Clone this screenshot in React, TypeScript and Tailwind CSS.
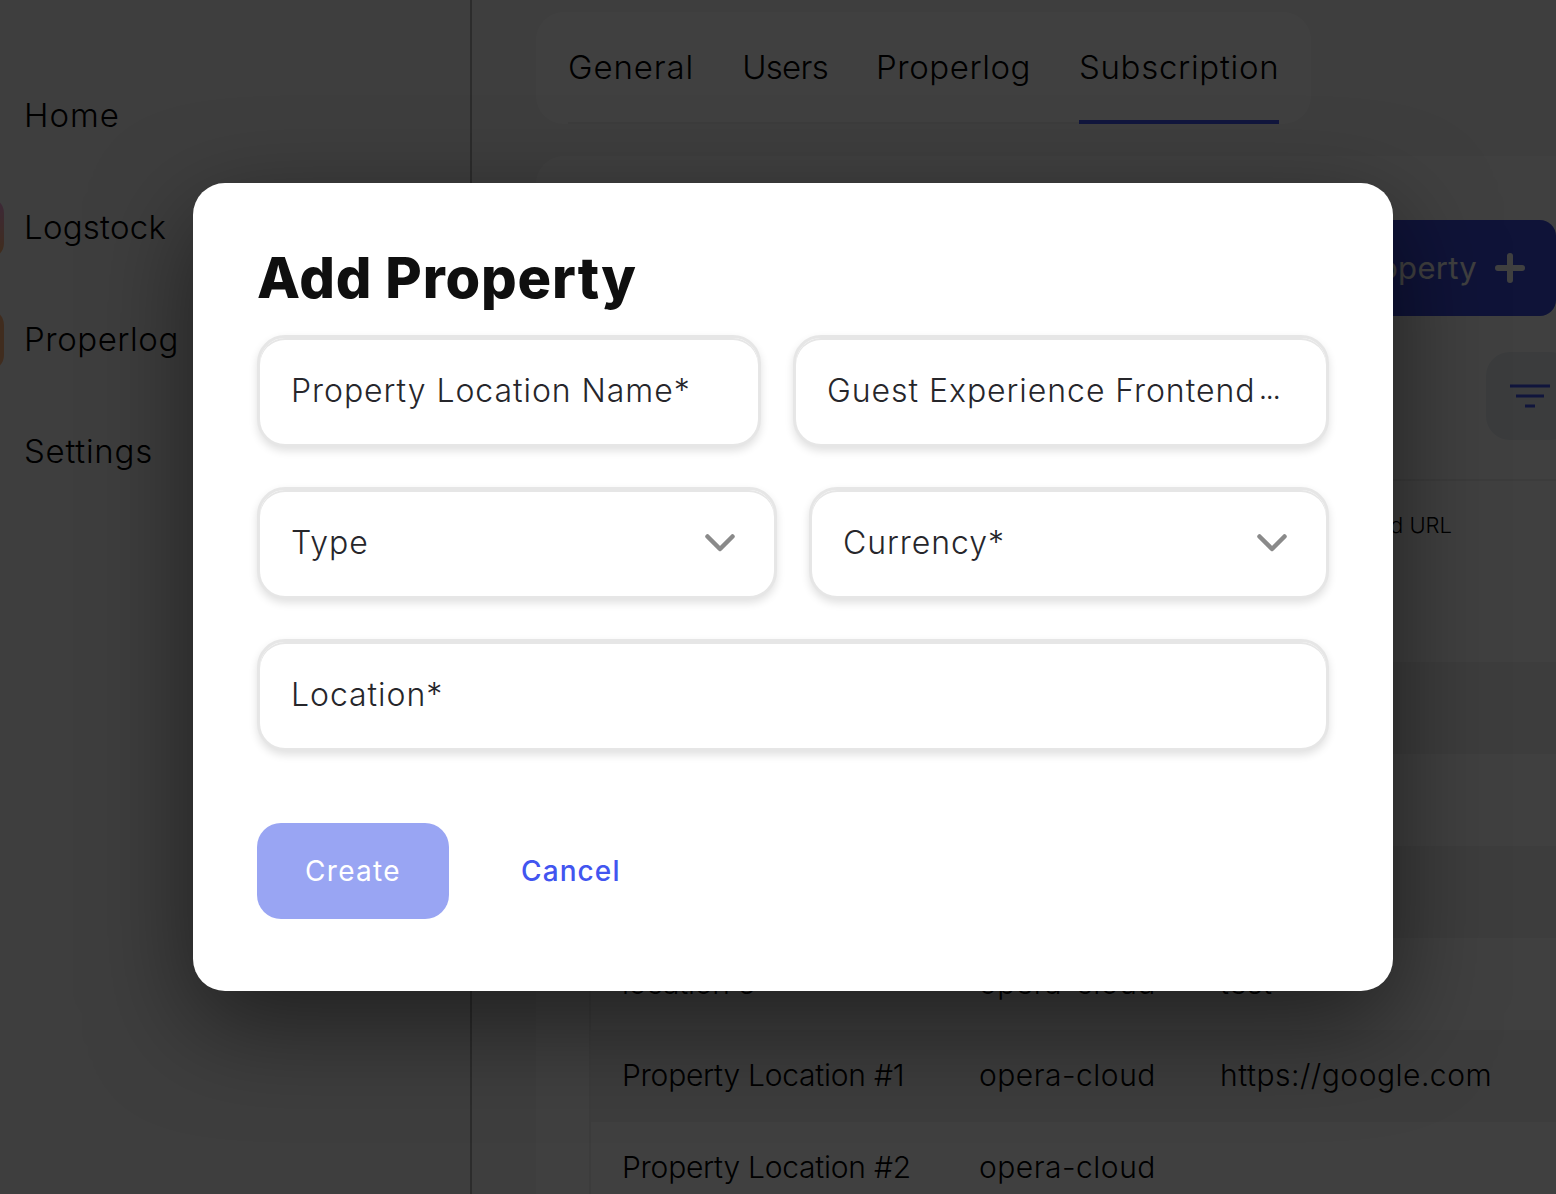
import React from 'react';

const navItems = [
  { label: 'Home', icon: '', tracking: 'tracking-[1px]' },
  { label: 'Logstock', icon: 'bg-gradient-to-b from-[#f0a0e0] to-[#ffb060]', tracking: 'tracking-[0.25px]' },
  { label: 'Properlog', icon: 'bg-[#ffb07a]', tracking: 'tracking-[0.55px]' },
  { label: 'Settings', icon: '', tracking: 'tracking-[0.75px]' },
];

const tabs = [
  { label: 'General', className: 'tracking-[0.9px] border-transparent' },
  { label: 'Users', className: 'tracking-[-0.7px] border-transparent' },
  { label: 'Properlog', className: 'tracking-[0.55px] border-transparent' },
  { label: 'Subscription', className: 'tracking-[0.7px] border-[#4558f2]' },
];

const rows = [
  { name: 'location 1', type: 'opera-cloud', url: 'test', bg: '' },
  { name: 'location 2', type: 'opera-cloud', url: 'test', bg: 'bg-[#f1f1f1]' },
  { name: 'location 3', type: 'opera-cloud', url: 'test', bg: '' },
  { name: 'location 4', type: 'opera-cloud', url: 'test', bg: 'bg-[#f1f1f1]' },
  { name: 'location 5', type: 'opera-cloud', url: 'test', bg: '' },
  { name: 'Property Location #1', type: 'opera-cloud', url: 'https://google.com', bg: 'bg-[#f1f1f1]' },
  { name: 'Property Location #2', type: 'opera-cloud', url: '', bg: '' },
];

const fieldClass =
  'flex h-[112px] items-center rounded-[28px] border-[3px] border-[#e6e6e6] bg-white pl-[31px] pr-[39px] text-[32px] font-[350] tracking-[0.95px] text-[#26262b] shadow-[inset_0_2px_0_#e6e6e6,0_4px_8px_rgba(0,0,0,0.12)]';

const Chevron = () => (
  <svg width="30" height="18" viewBox="0 0 30 18" fill="none" className="ml-auto">
    <path d="M2.5 2.5L15 15L27.5 2.5" stroke="#8a8a8a" strokeWidth="4.5" strokeLinecap="round" strokeLinejoin="round" />
  </svg>
);

export default function App() {
  return (
    <div className="relative flex h-screen w-full overflow-hidden bg-[#f7f7f7] font-['Inter',sans-serif] text-black">
      {/* Sidebar */}
      <aside className="w-[472px] shrink-0 border-r-2 border-[#b0b0b0] pt-[60px]">
        {navItems.map((item) => (
          <div
            key={item.label}
            className={`relative flex h-[112px] items-center pl-6 text-[33px] font-[350] ${item.tracking}`}
          >
            {item.icon && <span className={`absolute -left-14 h-[62px] w-[60px] rounded-2xl ${item.icon}`} />}
            {item.label}
          </div>
        ))}
      </aside>

      {/* Main */}
      <main className="min-w-0 flex-1 pl-16 pt-3">
        <div className="inline-flex h-[112px] rounded-[28px] bg-white px-8">
          <div className="flex gap-12 border-b-2 border-[#eeeeee]">
            {tabs.map((tab) => (
              <div
                key={tab.label}
                className={`-mb-[2px] flex items-center border-b-4 pt-1 text-[33px] font-[350] ${tab.className}`}
              >
                {tab.label}
              </div>
            ))}
          </div>
        </div>

        <div className="mt-8 w-[1100px] rounded-t-[28px] bg-white pt-16">
          <div className="flex h-[96px] justify-end pr-20">
            <button className="flex w-[400px] items-center justify-end gap-[18px] rounded-2xl bg-[#3c4ee0] pr-[31px] text-[31px] tracking-[0.3px] text-white">
              Add Property
              <svg width="30" height="30" viewBox="0 0 30 30" fill="none">
                <path d="M15 3v24M3 15h24" stroke="white" strokeWidth="6" strokeLinecap="round" />
              </svg>
            </button>
          </div>
          <div className="ml-[950px] mt-9 flex h-[88px] w-[88px] items-start rounded-3xl bg-[#e9eff4] pl-6 pt-8">
            <svg width="40" height="24" viewBox="0 0 40 24" fill="none" className="shrink-0">
              <path d="M0 2h40M6 12h28M15 22h10" stroke="#4255f0" strokeWidth="3" />
            </svg>
          </div>
          <div className="mt-[39px] border-t-2 border-[#eeeeee] pl-[53px]">
            <div className="border-l-2 border-[#eeeeee]">
              <div className="grid h-[89px] grid-cols-[357px_241px_1fr] items-center pl-[31px] text-[22px] font-[350]">
                <span>Name</span>
                <span>Type</span>
                <span className="ml-[26px]">Guest Frontend URL</span>
              </div>
              {rows.map((row) => (
                <div
                  key={row.name}
                  className={`grid h-[92px] grid-cols-[357px_241px_1fr] items-center pb-px pl-[31px] text-[30px] font-[350] ${row.bg}`}
                >
                  <span className="tracking-[-0.25px]">{row.name}</span>
                  <span className="tracking-[0.5px]">{row.type}</span>
                  <span className="tracking-[0.5px]">{row.url}</span>
                </div>
              ))}
            </div>
          </div>
        </div>
      </main>

      {/* Modal overlay */}
      <div className="absolute inset-0 bg-black/75" />
      <div className="absolute left-[193px] top-[183px] h-[808px] w-[1200px] rounded-[32px] bg-white px-16 pt-[60px] shadow-[0_32px_100px_rgba(0,0,0,0.5)]">
        <h2 className="text-[56px] font-[850] leading-[70px] tracking-[0.85px] text-[#0f0f0f]">Add Property</h2>
        <div className="mt-[22px] flex gap-8">
          <div className={`${fieldClass} w-[504px]`}>Property Location Name*</div>
          <div className={`${fieldClass} flex-1`}>
            Guest Experience Frontend <span className="ml-1 text-[24px] font-normal tracking-[0px]">...</span>
          </div>
        </div>
        <div className="mt-10 flex gap-8">
          <div className={`${fieldClass} flex-1`}>
            Type
            <Chevron />
          </div>
          <div className={`${fieldClass} flex-1`}>
            Currency*
            <Chevron />
          </div>
        </div>
        <div className={`${fieldClass} mt-10`}>Location*</div>
        <div className="mt-[72px] flex items-center gap-[72px]">
          <button className="h-[96px] w-[192px] rounded-3xl bg-[#99a5f3] text-[28px] tracking-[1.3px] text-white">
            Create
          </button>
          <button className="text-[28px] font-medium tracking-[1.1px] text-[#4255f0]">Cancel</button>
        </div>
      </div>
    </div>
  );
}
